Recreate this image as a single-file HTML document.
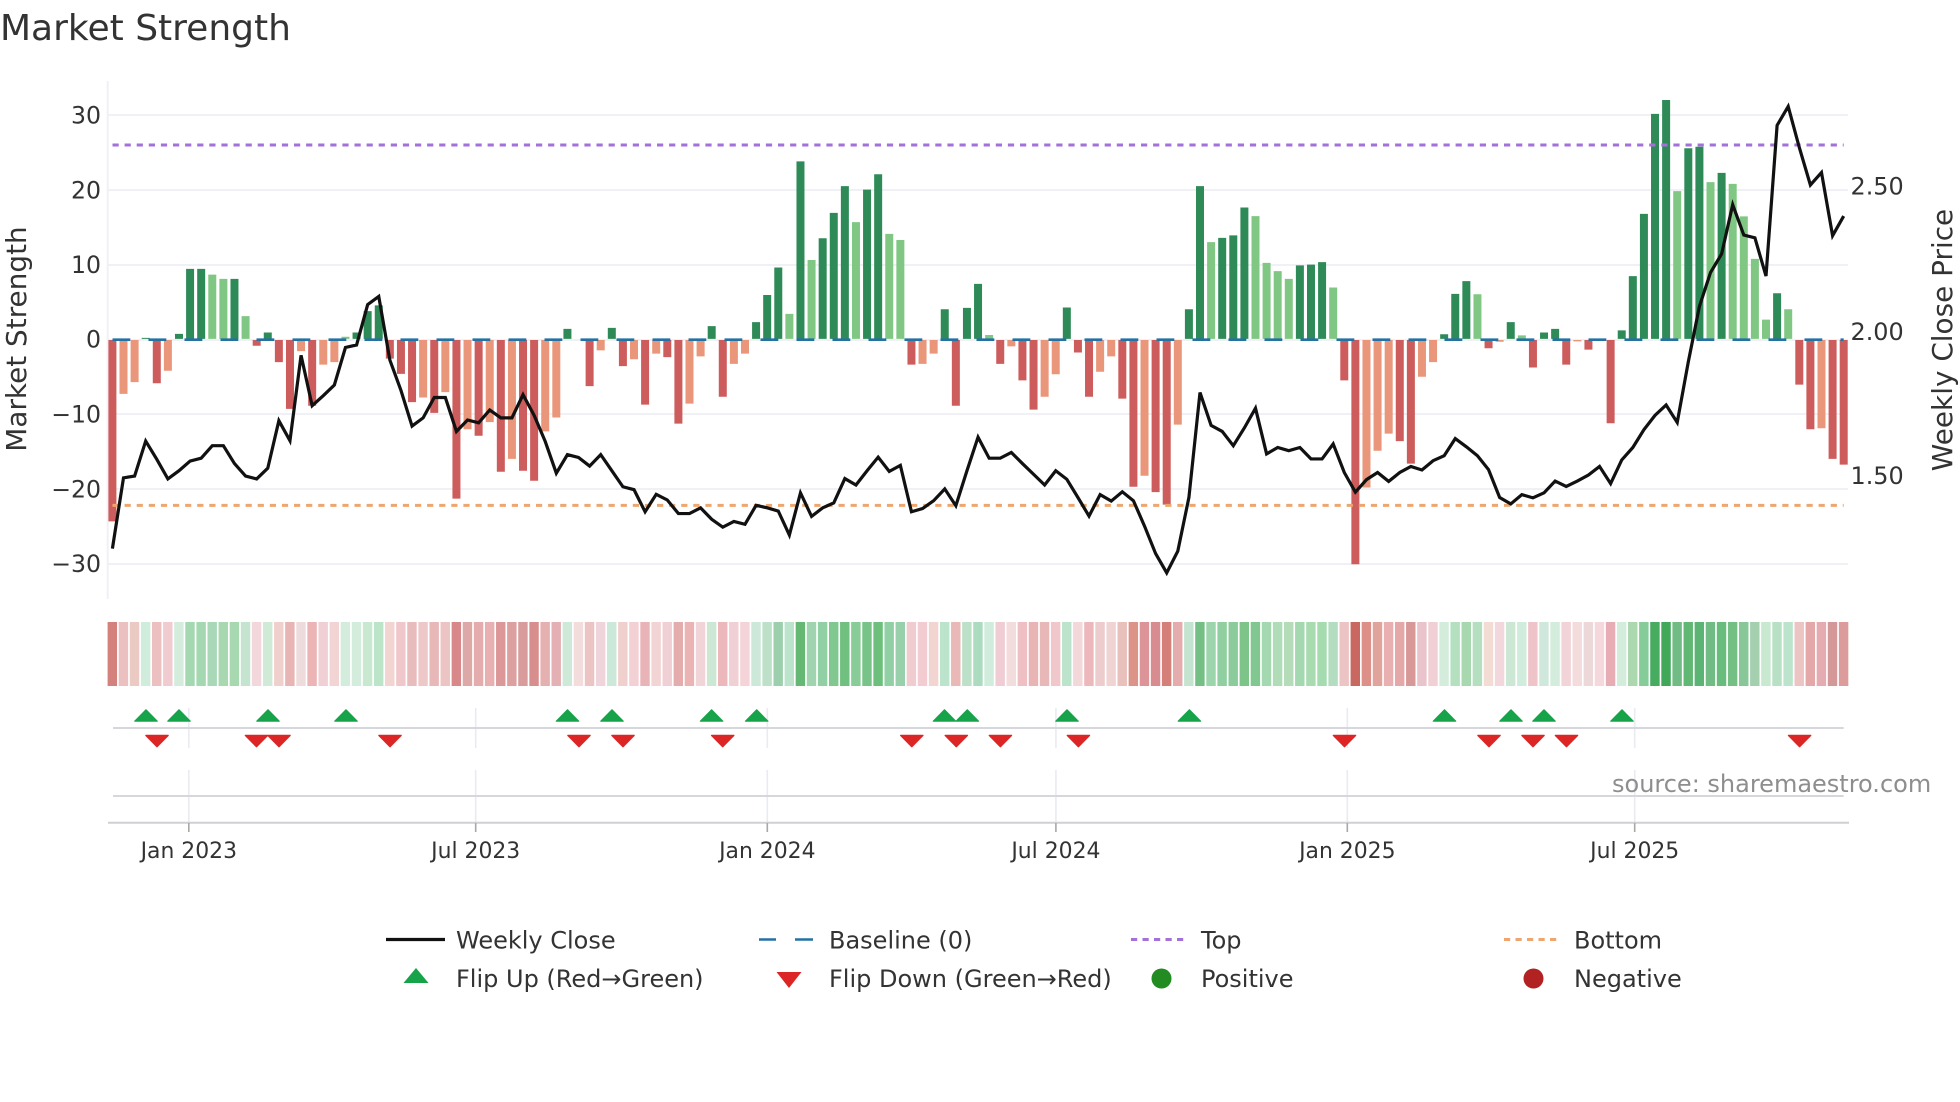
<!DOCTYPE html>
<html>
<head>
<meta charset="utf-8">
<title>Market Strength</title>
<style>
html,body{margin:0;padding:0;background:#fff;}
#root{position:relative;width:1960px;height:1102px;overflow:hidden;background:#fff;font-family:"DejaVu Sans",sans-serif;}
svg{position:absolute;left:0;top:0;}
text{font-family:"DejaVu Sans",sans-serif;fill:#333;}
.nss{vector-effect:non-scaling-stroke;fill:none;}
</style>
</head>
<body>
<div id="root">
<svg width="1960" height="1102" viewBox="0 0 1960 1102">
  <text x="0" y="40" font-size="36" style="fill:#333">Market Strength</text>

  <!-- grid -->
  <g stroke="#eff1f6" stroke-width="2">
    <path d="M108 115H1848M108 190H1848M108 265H1848M108 340H1848M108 414H1848M108 489H1848M108 564H1848"/>
    <path d="M107.7 81V599"/>
    <path d="M188.8 708V748M188.8 770V823M475.7 708V748M475.7 770V823M767.3 708V748M767.3 770V823M1055.9 708V748M1055.9 770V823M1347.3 708V748M1347.3 770V823M1634.7 708V748M1634.7 770V823" stroke="#e9ebf0" stroke-width="1.6"/>
  </g>

  <!-- bars, coordinates: x = week index, y = sampled units -->
  <g transform="translate(112.4 60) scale(11.098 .35714)" stroke-width="8">
    <path class="nss" stroke="#cd5c5c" d="M0 784V1292M4 784V905M13 784V800M15 784V846M16 784V977M18 784V968M25 784V836M26 784V879M27 784V958M29 784V988M31 784V1228M33 784V1052M35 784V1153M37 784V1150M38 784V1178M43 784V913M46 784V857M48 784V965M50 784V832M51 784V1018M55 784V943M72 784V853M76 784V968M80 784V851M82 784V897M83 784V979M87 784V819M88 784V943M91 784V948M92 784V1195M94 784V1210M95 784V1245M111 784V897M112 784V1412M116 784V1067M117 784V1130M124 784V807M128 784V861M131 784V853M133 784V811M135 784V1017M152 784V909M153 784V1034M155 784V1117M156 784V1133"/>
    <path class="nss" stroke="#e9967a" d="M1 784V935M2 784V902M5 784V870M17 784V815M19 784V853M20 784V846M28 784V945M30 784V930M32 784V1034M34 784V1014M36 784V1117M39 784V1040M40 784V1001M44 784V813M47 784V838M49 784V822M52 784V962M53 784V830M56 784V851M57 784V822M73 784V851M74 784V822M81 784V802M84 784V943M85 784V880M89 784V873M90 784V830M93 784V1164M96 784V1021M113 784V1197M114 784V1094M115 784V1046M118 784V887M119 784V846M125 784V789M132 784V788M154 784V1031"/>
    <path class="nss" stroke="#2e8b57" d="M3 781V778M6 781V767M7 781V585M8 781V585M11 781V613M14 781V763M22 781V763M23 781V703M24 781V687M41 781V753M45 781V750M54 781V745M58 781V734M59 781V658M60 781V581M62 781V284M64 781V499M65 781V428M66 781V353M68 781V363M69 781V320M75 781V698M77 781V694M78 781V627M86 781V693M97 781V698M98 781V353M100 781V498M101 781V491M102 781V413M107 781V575M108 781V573M109 781V566M120 781V768M121 781V655M122 781V619M126 781V734M129 781V763M130 781V753M136 781V757M137 781V605M138 781V431M139 781V151M140 781V112M142 781V247M143 781V243M145 781V316M150 781V653"/>
    <path class="nss" stroke="#81c784" d="M9 781V601M10 781V613M12 781V717M21 781V775M61 781V711M63 781V560M67 781V454M70 781V487M71 781V504M79 781V770M99 781V510M103 781V437M104 781V568M105 781V591M106 781V613M110 781V637M123 781V656M127 781V771M141 781V367M144 781V342M146 781V347M147 781V438M148 781V557M149 781V727M151 781V698"/>
  </g>

  <!-- reference lines -->
  <path d="M112.5 339.7H1843.7" stroke="#2471a3" stroke-width="2.6" stroke-dasharray="17.8 18.2" fill="none"/>
  <path d="M112.5 145H1843.7" stroke="#a371d9" stroke-width="3" stroke-dasharray="6.2 5.9" fill="none"/>
  <path d="M112.5 505.4H1843.7" stroke="#eea66e" stroke-width="3" stroke-dasharray="6.2 5.9" fill="none"/>

  <!-- weekly close -->
  <g transform="translate(112.4 60) scale(11.098 .35714)">
    <polyline class="nss" stroke="#111" stroke-width="3.2" stroke-linejoin="miter" points="0,1368 1,1170 2,1165 3,1067 4,1118 5,1173 6,1150 7,1123 8,1115 9,1080 10,1080 11,1130 12,1165 13,1173 14,1143 15,1010 16,1066 17,827 18,968 19,940 20,910 21,805 22,798 23,685 24,662 25,840 26,925 27,1025 28,1002 29,945 30,945 31,1040 32,1008 33,1016 34,980 35,1002 36,1002 37,937 38,995 39,1068 40,1157 41,1105 42,1113 43,1137 44,1105 45,1150 46,1195 47,1203 48,1265 49,1216 50,1232 51,1270 52,1270 53,1254 54,1286 55,1308 56,1292 57,1300 58,1247 59,1254 60,1263 61,1330 62,1212 63,1278 64,1254 65,1240 66,1172 67,1190 68,1150 69,1112 70,1152 71,1135 72,1265 73,1256 74,1234 75,1201 76,1248 77,1150 78,1056 79,1115 80,1115 81,1099 82,1130 83,1160 84,1190 85,1150 86,1174 87,1225 88,1277 89,1217 90,1235 91,1209 92,1234 93,1305 94,1382 95,1436 96,1375 97,1225 98,931 99,1023 100,1040 101,1080 102,1030 103,975 104,1103 105,1085 106,1094 107,1085 108,1117 109,1117 110,1075 111,1155 112,1210 113,1175 114,1155 115,1180 116,1155 117,1138 118,1148 119,1122 120,1108 121,1060 122,1083 123,1108 124,1147 125,1225 126,1243 127,1217 128,1226 129,1212 130,1179 131,1194 132,1179 133,1162 134,1138 135,1186 136,1120 137,1085 138,1035 139,995 140,966 141,1015 142,845 143,690 144,595 145,543 146,405 147,490 148,498 149,605 150,183 151,130 152,245 153,350 154,315 155,492 156,437"/>
  </g>

  <!-- axis labels -->
  <g font-size="23.6" text-anchor="end">
    <text x="101" y="123.5">30</text>
    <text x="101" y="198.5">20</text>
    <text x="101" y="273">10</text>
    <text x="101" y="347.5">0</text>
    <text x="101" y="422.5">−10</text>
    <text x="101" y="497.5">−20</text>
    <text x="101" y="572">−30</text>
  </g>
  <g font-size="23.9">
    <text x="1850.5" y="194.5">2.50</text>
    <text x="1850.5" y="340">2.00</text>
    <text x="1850.5" y="484">1.50</text>
  </g>
  <text transform="translate(26 339) rotate(-90)" font-size="27.9" text-anchor="middle">Market Strength</text>
  <text transform="translate(1952 340) rotate(-90)" font-size="27.9" text-anchor="middle">Weekly Close Price</text>

  <!-- heat strip -->
  <g transform="translate(107.6 622) scale(11.098 64)">
<rect x="0" width=".85" height="1" fill="#d4807c"/><rect x="1" width=".85" height="1" fill="#ecc0c0"/><rect x="2" width=".85" height="1" fill="#eccac4"/><rect x="3" width=".85" height="1" fill="#d0ecdc"/><rect x="4" width=".85" height="1" fill="#ecc0c0"/><rect x="5" width=".85" height="1" fill="#f0ccd0"/><rect x="6" width=".85" height="1" fill="#d4ecdc"/><rect x="7" width=".85" height="1" fill="#a4d8b0"/><rect x="8" width=".85" height="1" fill="#a4d8b0"/><rect x="9" width=".85" height="1" fill="#a8d8b8"/>
<rect x="10" width=".85" height="1" fill="#a8d8b0"/><rect x="11" width=".85" height="1" fill="#a8d8b0"/><rect x="12" width=".85" height="1" fill="#c4e4d0"/><rect x="13" width=".85" height="1" fill="#f2d8dc"/><rect x="14" width=".85" height="1" fill="#d0ead8"/><rect x="15" width=".85" height="1" fill="#f0d0cc"/><rect x="16" width=".85" height="1" fill="#e8b4b4"/><rect x="17" width=".85" height="1" fill="#eedcdc"/><rect x="18" width=".85" height="1" fill="#ecb4b4"/><rect x="19" width=".85" height="1" fill="#f0d0d4"/>
<rect x="20" width=".85" height="1" fill="#f2d4d4"/><rect x="21" width=".85" height="1" fill="#d4ecdc"/><rect x="22" width=".85" height="1" fill="#d4ecdc"/><rect x="23" width=".85" height="1" fill="#c8e8d0"/><rect x="24" width=".85" height="1" fill="#bce4c8"/><rect x="25" width=".85" height="1" fill="#f2d4d0"/><rect x="26" width=".85" height="1" fill="#f0c8cc"/><rect x="27" width=".85" height="1" fill="#e8bcbc"/><rect x="28" width=".85" height="1" fill="#eec8c8"/><rect x="29" width=".85" height="1" fill="#e8b8b8"/>
<rect x="30" width=".85" height="1" fill="#ecc4c4"/><rect x="31" width=".85" height="1" fill="#d88888"/><rect x="32" width=".85" height="1" fill="#dca8a8"/><rect x="33" width=".85" height="1" fill="#e4acac"/><rect x="34" width=".85" height="1" fill="#e8b0b0"/><rect x="35" width=".85" height="1" fill="#dc9898"/><rect x="36" width=".85" height="1" fill="#dca0a0"/><rect x="37" width=".85" height="1" fill="#d89c9c"/><rect x="38" width=".85" height="1" fill="#d98e8e"/><rect x="39" width=".85" height="1" fill="#e4b0b0"/>
<rect x="40" width=".85" height="1" fill="#e4b0b4"/><rect x="41" width=".85" height="1" fill="#cfe9d9"/><rect x="42" width=".85" height="1" fill="#f2dcdc"/><rect x="43" width=".85" height="1" fill="#ecc4c4"/><rect x="44" width=".85" height="1" fill="#f0d4dc"/><rect x="45" width=".85" height="1" fill="#cce8d8"/><rect x="46" width=".85" height="1" fill="#f0d0cc"/><rect x="47" width=".85" height="1" fill="#f2d0d4"/><rect x="48" width=".85" height="1" fill="#e8b4b8"/><rect x="49" width=".85" height="1" fill="#f2d4d4"/>
<rect x="50" width=".85" height="1" fill="#f0d0d4"/><rect x="51" width=".85" height="1" fill="#e4acac"/><rect x="52" width=".85" height="1" fill="#eab4b4"/><rect x="53" width=".85" height="1" fill="#f0d4d8"/><rect x="54" width=".85" height="1" fill="#cce8d4"/><rect x="55" width=".85" height="1" fill="#ecb8bc"/><rect x="56" width=".85" height="1" fill="#f0d0d4"/><rect x="57" width=".85" height="1" fill="#f4d4d8"/><rect x="58" width=".85" height="1" fill="#cce8d8"/><rect x="59" width=".85" height="1" fill="#bce0c8"/>
<rect x="60" width=".85" height="1" fill="#9cd0ac"/><rect x="61" width=".85" height="1" fill="#bce4cc"/><rect x="62" width=".85" height="1" fill="#64b874"/><rect x="63" width=".85" height="1" fill="#a0d4b0"/><rect x="64" width=".85" height="1" fill="#90d0a4"/><rect x="65" width=".85" height="1" fill="#80c890"/><rect x="66" width=".85" height="1" fill="#70c080"/><rect x="67" width=".85" height="1" fill="#88cc98"/><rect x="68" width=".85" height="1" fill="#78c488"/><rect x="69" width=".85" height="1" fill="#6cc07c"/>
<rect x="70" width=".85" height="1" fill="#90d0a4"/><rect x="71" width=".85" height="1" fill="#98d0ac"/><rect x="72" width=".85" height="1" fill="#f0ccd0"/><rect x="73" width=".85" height="1" fill="#f2ccd0"/><rect x="74" width=".85" height="1" fill="#f2d4d0"/><rect x="75" width=".85" height="1" fill="#bce4cc"/><rect x="76" width=".85" height="1" fill="#ebb8b8"/><rect x="77" width=".85" height="1" fill="#bce0c8"/><rect x="78" width=".85" height="1" fill="#acdcc0"/><rect x="79" width=".85" height="1" fill="#d0ecdc"/>
<rect x="80" width=".85" height="1" fill="#f0ccd4"/><rect x="81" width=".85" height="1" fill="#f2dcdc"/><rect x="82" width=".85" height="1" fill="#eec0c4"/><rect x="83" width=".85" height="1" fill="#e8b4b4"/><rect x="84" width=".85" height="1" fill="#e8b8b8"/><rect x="85" width=".85" height="1" fill="#f0c8cc"/><rect x="86" width=".85" height="1" fill="#bce4cc"/><rect x="87" width=".85" height="1" fill="#f2d8d8"/><rect x="88" width=".85" height="1" fill="#ecb8bc"/><rect x="89" width=".85" height="1" fill="#eccccc"/>
<rect x="90" width=".85" height="1" fill="#f0d4d4"/><rect x="91" width=".85" height="1" fill="#e8c0bc"/><rect x="92" width=".85" height="1" fill="#dc9488"/><rect x="93" width=".85" height="1" fill="#dc9498"/><rect x="94" width=".85" height="1" fill="#d88c90"/><rect x="95" width=".85" height="1" fill="#d48078"/><rect x="96" width=".85" height="1" fill="#e4acac"/><rect x="97" width=".85" height="1" fill="#c4e4d0"/><rect x="98" width=".85" height="1" fill="#74c084"/><rect x="99" width=".85" height="1" fill="#9cd4ac"/>
<rect x="100" width=".85" height="1" fill="#90d0a0"/><rect x="101" width=".85" height="1" fill="#8ccc9c"/><rect x="102" width=".85" height="1" fill="#7cc488"/><rect x="103" width=".85" height="1" fill="#80c890"/><rect x="104" width=".85" height="1" fill="#a4d8b0"/><rect x="105" width=".85" height="1" fill="#b0dcb8"/><rect x="106" width=".85" height="1" fill="#b4dcb8"/><rect x="107" width=".85" height="1" fill="#a4d8b0"/><rect x="108" width=".85" height="1" fill="#a8dcb0"/><rect x="109" width=".85" height="1" fill="#a4dcb0"/>
<rect x="110" width=".85" height="1" fill="#b4dcc0"/><rect x="111" width=".85" height="1" fill="#ecc4c4"/><rect x="112" width=".85" height="1" fill="#c86860"/><rect x="113" width=".85" height="1" fill="#dc9088"/><rect x="114" width=".85" height="1" fill="#e0a49c"/><rect x="115" width=".85" height="1" fill="#e8b0b0"/><rect x="116" width=".85" height="1" fill="#e4a8a8"/><rect x="117" width=".85" height="1" fill="#d89898"/><rect x="118" width=".85" height="1" fill="#eac4cc"/><rect x="119" width=".85" height="1" fill="#f0d0d4"/>
<rect x="120" width=".85" height="1" fill="#d4ecdc"/><rect x="121" width=".85" height="1" fill="#b4e0c0"/><rect x="122" width=".85" height="1" fill="#a8d8b0"/><rect x="123" width=".85" height="1" fill="#b4e0c0"/><rect x="124" width=".85" height="1" fill="#f2dcd4"/><rect x="125" width=".85" height="1" fill="#f2d8dc"/><rect x="126" width=".85" height="1" fill="#cce8d4"/><rect x="127" width=".85" height="1" fill="#d0ecdc"/><rect x="128" width=".85" height="1" fill="#eec4c8"/><rect x="129" width=".85" height="1" fill="#d0e8dc"/>
<rect x="130" width=".85" height="1" fill="#d4ecdc"/><rect x="131" width=".85" height="1" fill="#f2d4d8"/><rect x="132" width=".85" height="1" fill="#f4dcdc"/><rect x="133" width=".85" height="1" fill="#ecd8d8"/><rect x="134" width=".85" height="1" fill="#f4d8dc"/><rect x="135" width=".85" height="1" fill="#e8acb4"/><rect x="136" width=".85" height="1" fill="#d4ecdc"/><rect x="137" width=".85" height="1" fill="#acd8b0"/><rect x="138" width=".85" height="1" fill="#84cc98"/><rect x="139" width=".85" height="1" fill="#48ac60"/>
<rect x="140" width=".85" height="1" fill="#40a858"/><rect x="141" width=".85" height="1" fill="#70bc84"/><rect x="142" width=".85" height="1" fill="#60b874"/><rect x="143" width=".85" height="1" fill="#5cb474"/><rect x="144" width=".85" height="1" fill="#70bc84"/><rect x="145" width=".85" height="1" fill="#68bc7c"/><rect x="146" width=".85" height="1" fill="#74c084"/><rect x="147" width=".85" height="1" fill="#88c898"/><rect x="148" width=".85" height="1" fill="#a4d0b0"/><rect x="149" width=".85" height="1" fill="#c8e8d0"/>
<rect x="150" width=".85" height="1" fill="#b8e0c4"/><rect x="151" width=".85" height="1" fill="#bce4cc"/><rect x="152" width=".85" height="1" fill="#ecc4c4"/><rect x="153" width=".85" height="1" fill="#e4a8a8"/><rect x="154" width=".85" height="1" fill="#e4acb0"/><rect x="155" width=".85" height="1" fill="#d49898"/><rect x="156" width=".85" height="1" fill="#dc9c9c"/>
  </g>

  <!-- lower panels -->
  <path d="M113 728H1843.7M113 796H1843.7" stroke="#d6d7dc" stroke-width="2" fill="none"/>
  <path d="M108 822.7H1849" stroke="#cfd0d4" stroke-width="2" fill="none"/>
  <path d="M188.8 823V832M475.7 823V832M767.3 823V832M1055.9 823V832M1347.3 823V832M1634.7 823V832" stroke="#a8a8a8" stroke-width="1.6" fill="none"/>

  <path fill="#16a34a" stroke="#16a34a" stroke-width="1.2" stroke-linejoin="round" d="M146 709.8l-11.2 11.4h22.4zM179 709.8l-11.2 11.4h22.4zM268 709.8l-11.2 11.4h22.4zM346 709.8l-11.2 11.4h22.4zM567.5 709.8l-11.2 11.4h22.4zM612 709.8l-11.2 11.4h22.4zM711.6 709.8l-11.2 11.4h22.4zM756.7 709.8l-11.2 11.4h22.4zM944.5 709.8l-11.2 11.4h22.4zM967.3 709.8l-11.2 11.4h22.4zM1067 709.8l-11.2 11.4h22.4zM1189.4 709.8l-11.2 11.4h22.4zM1444.5 709.8l-11.2 11.4h22.4zM1511 709.8l-11.2 11.4h22.4zM1544 709.8l-11.2 11.4h22.4zM1622 709.8l-11.2 11.4h22.4z"/>
  <path fill="#dc2626" stroke="#dc2626" stroke-width="1.2" stroke-linejoin="round" d="M157 746.8l-11.2-11.4h22.4zM256.5 746.8l-11.2-11.4h22.4zM279 746.8l-11.2-11.4h22.4zM390 746.8l-11.2-11.4h22.4zM579 746.8l-11.2-11.4h22.4zM623 746.8l-11.2-11.4h22.4zM722.7 746.8l-11.2-11.4h22.4zM911.8 746.8l-11.2-11.4h22.4zM956.3 746.8l-11.2-11.4h22.4zM1000.4 746.8l-11.2-11.4h22.4zM1078.4 746.8l-11.2-11.4h22.4zM1344.5 746.8l-11.2-11.4h22.4zM1489 746.8l-11.2-11.4h22.4zM1533 746.8l-11.2-11.4h22.4zM1566.5 746.8l-11.2-11.4h22.4zM1799.6 746.8l-11.2-11.4h22.4z"/>

  <g font-size="21.9" text-anchor="middle">
    <text x="188.8" y="858">Jan 2023</text>
    <text x="475.7" y="858">Jul 2023</text>
    <text x="767.3" y="858">Jan 2024</text>
    <text x="1055.9" y="858">Jul 2024</text>
    <text x="1347.3" y="858">Jan 2025</text>
    <text x="1634.7" y="858">Jul 2025</text>
  </g>
  <text x="1612" y="792" font-size="24" style="fill:#8e8e8e">source: sharemaestro.com</text>

  <!-- legend -->
  <path d="M386 939.5H445" stroke="#111" stroke-width="3.2"/>
  <path d="M759 939.5H776M795 939.5H813" stroke="#2471a3" stroke-width="2.6"/>
  <path d="M1131 939.5H1186" stroke="#a371d9" stroke-width="3" stroke-dasharray="6.2 5.3"/>
  <path d="M1504 939.5H1560" stroke="#eea66e" stroke-width="3" stroke-dasharray="6.2 5.3"/>
  <path fill="#16a34a" d="M416 968l12.5 15h-25z"/>
  <path fill="#dc2626" d="M789 988l-12.5-16h25z"/>
  <circle cx="1161.5" cy="978.5" r="10" fill="#228b22"/>
  <circle cx="1533.5" cy="978.5" r="10" fill="#b22222"/>
  <g font-size="24">
    <text x="456" y="948.5">Weekly Close</text>
    <text x="829" y="948.5">Baseline (0)</text>
    <text x="1201" y="948.5">Top</text>
    <text x="1574" y="948.5">Bottom</text>
    <text x="456" y="987">Flip Up (Red→Green)</text>
    <text x="829" y="987">Flip Down (Green→Red)</text>
    <text x="1201" y="987">Positive</text>
    <text x="1574" y="987">Negative</text>
  </g>
</svg>
</div>
</body>
</html>
